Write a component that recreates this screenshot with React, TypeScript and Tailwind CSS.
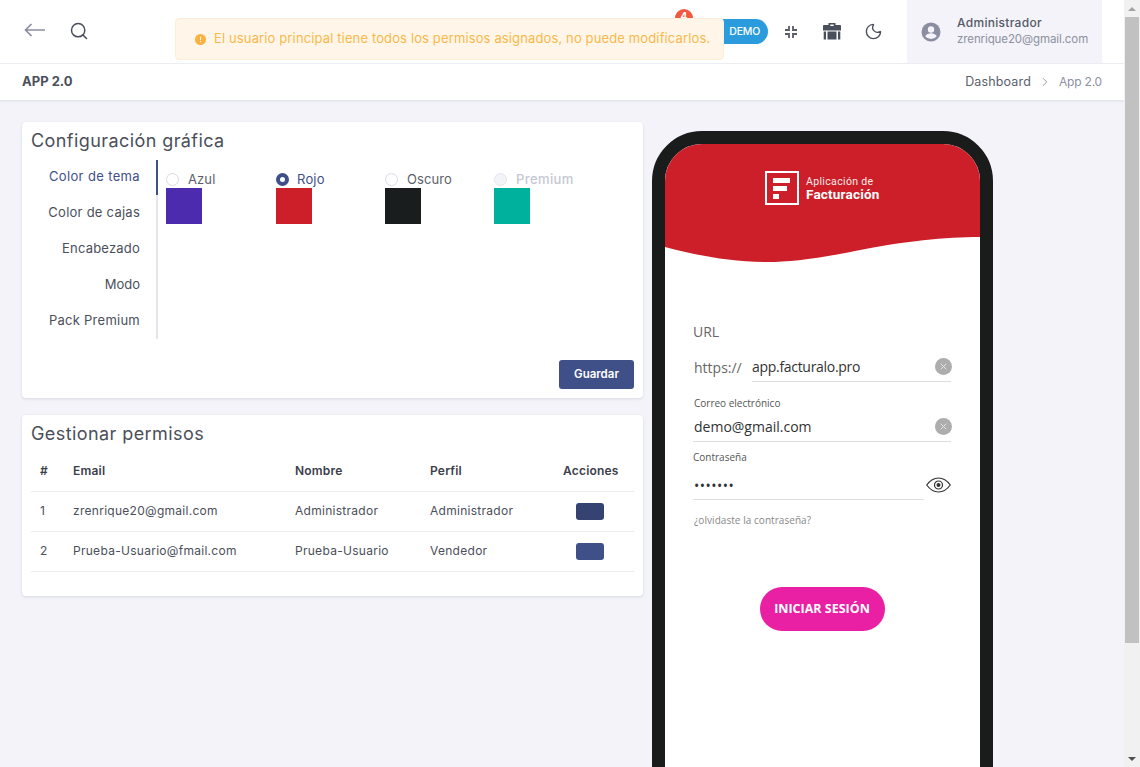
import React from "react";
import { Search, Moon, ChevronRight } from "lucide-react";

const poppins = "font-['Inter','Liberation_Sans',sans-serif]";

function Radio({ label, checked, muted, className }: { label: string; checked?: boolean; muted?: boolean; className: string }) {
  return (
    <div className={className}>
      <div className="flex items-center h-[17px]">
        <span
          className={
            checked
              ? "w-[13px] h-[13px] rounded-full border-[4px] border-[#3f4f88] bg-white"
              : muted
                ? "w-[13px] h-[13px] rounded-full border border-[#e4e6ef] bg-[#f3f4f7]"
                : "w-[13px] h-[13px] rounded-full border border-[#d8dae5] bg-white"
          }
        />
        <span
          className={
            checked
              ? "ml-[8px] text-[13px] tracking-[0.2px] text-[#3f4f88]"
              : muted
                ? "ml-[9px] text-[13px] tracking-[0.4px] font-medium text-[#c5c8d2]"
                : "ml-[9px] text-[13px] tracking-[0.1px] text-[#5b5f6b]"
          }
        >
          {label}
        </span>
      </div>
    </div>
  );
}

function ClearIcon() {
  return (
    <svg width="17" height="17" viewBox="0 0 17 17" className="shrink-0 -mr-[1px]">
      <circle cx="8.5" cy="8.5" r="8.5" fill="#adadad" />
      <path d="M5.7 5.7l5.6 5.6M11.3 5.7l-5.6 5.6" stroke="#e4e4e4" strokeWidth="1" />
    </svg>
  );
}

function Row({ n, email, name, profile, btn }: { n: string; email: string; name: string; profile: string; btn: string }) {
  return (
    <tr className="border-b border-[#e9ebf0] h-[40px] text-[12px] tracking-[0.28px] text-[#4b4f5a]">
      <td className="pl-[9px]">{n}</td>
      <td>{email}</td>
      <td>{name}</td>
      <td>{profile}</td>
      <td>
        <div className={btn} />
      </td>
    </tr>
  );
}

export default function App() {
  return (
    <div className={`${poppins} flex h-[767px] w-[1140px] overflow-hidden bg-[#f3f3f9]`}>
      <main className="relative w-[1124px] h-[767px] overflow-hidden">
        {/* top bar */}
        <header className="flex items-center h-[64px] bg-white border-b border-[#eceef3] pl-[24px] pr-[22px]">
          <svg width="21" height="14" viewBox="0 0 21 14" fill="none" stroke="#8a8ea3" strokeWidth="1.7" className="-mt-[3px]">
            <path d="M21 7H1.500M7.500 1L1.500 7l6 6" />
          </svg>
          <Search className="ml-[24px] -mt-[1px] w-[20px] h-[20px] text-[#4a4f5c]" strokeWidth={1.8} />
          <div className="flex-1" />
          <div className="flex items-center h-[25px] w-[48px] justify-end pr-[8px] rounded-r-full bg-[#2a9bdc] text-white text-[10.5px] font-medium tracking-[-0.2px]">
            DEMO
          </div>
          <svg width="14" height="14" viewBox="0 0 14 14" fill="none" stroke="#565b68" strokeWidth="1.8" className="ml-[16px]">
            <path d="M5 1v4H1M9 1v4h4M5 13V9H1M9 13V9h4" />
          </svg>
          <svg width="18" height="17" viewBox="0 0 18 17" className="ml-[25px] -mt-[1px]">
            <path d="M5.500 0h7v2H17.500l0.500 1v4.500H0V3l0.500-1H5.500zM7.300 1.500V3h3.400V1.500z" fill="#4a4f5c" fillRule="evenodd" />
            <path d="M0.700 8.500H3v8H1.200a0.500 0.500 0 0 1-0.500-0.500zM4.500 8.500h9v8h-9zM15 8.500h2.300V16a0.500 0.500 0 0 1-0.500 0.500H15z" fill="#4a4f5c" />
          </svg>
          <Moon className="ml-[23px] w-[19px] h-[19px] text-[#4a4f5c]" strokeWidth={1.7} />
          <div className="ml-[24px] flex items-center w-[195px] h-[63px] bg-[#f3f3f9] pl-[14px]">
            <svg width="20" height="20" viewBox="0 0 20 20" className="shrink-0">
              <circle cx="10" cy="10" r="9.500" fill="#8a8ea0" />
              <circle cx="10" cy="7.500" r="3.200" fill="#f3f3f9" />
              <path d="M4.200 14.200c1-2 3.400-3 5.800-3s4.800 1 5.800 3a7.400 7.400 0 0 1-11.600 0z" fill="#f3f3f9" />
            </svg>
            <div className="ml-[16px] mt-[-2px]">
              <div className="text-[12px] leading-[16px] tracking-[0.3px] font-medium text-[#555a66]">Administrador</div>
              <div className="text-[11.5px] leading-[16px] tracking-[-0.1px] text-[#8d91a0]">zrenrique20@gmail.com</div>
            </div>
          </div>
        </header>

        {/* notification badge + alert */}
        <div className="absolute left-[675px] top-[9px] w-[18px] h-[18px] rounded-full bg-[#f1583f] text-white text-[10px] font-bold text-center leading-[14px]">
          4
        </div>
        <div className="absolute left-[175px] top-[18px] w-[549px] h-[42px] flex items-center pl-[19px] rounded-[4px] border border-[#fdeed6] bg-[#fff6e9] text-[#fbb84a] text-[13px] tracking-[0.13px] whitespace-nowrap">
          <svg width="11" height="11" viewBox="0 0 11 11" className="shrink-0">
            <circle cx="5.500" cy="5.500" r="5.500" fill="#fbb040" />
            <rect x="5" y="2.500" width="1.100" height="3.600" fill="#fff6e9" />
            <rect x="5" y="7" width="1.100" height="1.200" fill="#fff6e9" />
          </svg>
          <span className="ml-[8px]">El usuario principal tiene todos los permisos asignados, no puede modificarlos.</span>
        </div>

        {/* breadcrumb */}
        <div className="flex items-center justify-between h-[37px] bg-white border-b border-[#e3e4ec] shadow-[0_1px_2px_rgba(50,50,90,0.06)] px-[22px]">
          <span className="text-[13px] font-bold text-[#4b4f5a]">APP 2.0</span>
          <div className="flex items-center text-[12.5px] tracking-[0.15px]">
            <span className="text-[#5b5f6b]">Dashboard</span>
            <ChevronRight className="mx-[7px] w-[14px] h-[14px] text-[#8d91a0]" strokeWidth={1.6} />
            <span className="text-[12px] tracking-[-0.2px] text-[#8d91a0]">App 2.0</span>
          </div>
        </div>

        {/* content */}
        <div className="flex items-start pl-[22px] pt-[21px]">
          <div className="w-[621px] shrink-0">
            <section className="relative h-[276px] bg-white rounded-[4px] shadow-[0_1px_3px_rgba(40,40,80,0.13)] px-[9px] pt-[8px]">
              <h2 className="text-[18px] leading-[22px] tracking-[0.42px] text-[#4b4f5a]">Configuración gráfica</h2>
              <div className="flex mt-[8px]">
                <nav className="relative w-[127px] h-[179px] border-r-[2px] border-[#e3e6ef] text-right pr-[16px]">
                  <div className="absolute right-[-2px] top-0 w-[2px] h-[35px] bg-[#3f4f88]" />
                  <div className="h-[36px] leading-[33px] text-[13px] tracking-[0.36px] text-[#3f4f88]">Color de tema</div>
                  <div className="h-[36px] leading-[33px] text-[13px] tracking-[0.25px] text-[#4b4f5a]">Color de cajas</div>
                  <div className="h-[36px] leading-[33px] text-[13px] tracking-[0.2px] text-[#4b4f5a]">Encabezado</div>
                  <div className="h-[36px] leading-[33px] text-[13px] text-[#4b4f5a]">Modo</div>
                  <div className="h-[36px] leading-[33px] text-[13px] tracking-[0.25px] text-[#4b4f5a]">Pack Premium</div>
                </nav>
                <div className="flex pl-[8px] pt-[11px]">
                  <Radio label="Azul" className="w-[110px]" />
                  <Radio label="Rojo" checked className="w-[109px]" />
                  <Radio label="Oscuro" className="w-[109px]" />
                  <Radio label="Premium" muted className="w-[100px]" />
                </div>
              </div>
              <div className="absolute left-[144px] top-[66px] flex">
                <div className="w-[36px] h-[36px] bg-[#4c2bae]" />
                <div className="ml-[74px] w-[36px] h-[36px] bg-[#cc1f29]" />
                <div className="ml-[73px] w-[36px] h-[36px] bg-[#1a1d1d]" />
                <div className="ml-[73px] w-[36px] h-[36px] bg-[#00b19d]" />
              </div>
              <div className="flex justify-end mt-[21px]">
                <button className="w-[75px] h-[29px] rounded-[3px] bg-[#3f4f88] text-white text-[11.5px] font-semibold">Guardar</button>
              </div>
            </section>

            <section className="mt-[17px] h-[181px] bg-white rounded-[4px] shadow-[0_1px_3px_rgba(40,40,80,0.13)] px-[9px] pt-[8px]">
              <h2 className="text-[18px] leading-[22px] tracking-[0.42px] text-[#4b4f5a]">Gestionar permisos</h2>
              <table className="mt-[6px] w-[603px] table-fixed border-collapse text-left">
                <colgroup>
                  <col className="w-[42px]" />
                  <col className="w-[222px]" />
                  <col className="w-[135px]" />
                  <col className="w-[125px]" />
                  <col className="w-[79px]" />
                </colgroup>
                <thead>
                  <tr className="border-b border-[#e9ebf0] h-[40px] text-[12px] tracking-[0.2px] font-semibold text-[#3c404b]">
                    <th className="pl-[9px] font-semibold">#</th>
                    <th className="font-semibold">Email</th>
                    <th className="font-semibold">Nombre</th>
                    <th className="font-semibold">Perfil</th>
                    <th className="pl-[8px] font-semibold">Acciones</th>
                  </tr>
                </thead>
                <tbody>
                  <Row n="1" email="zrenrique20@gmail.com" name="Administrador" profile="Administrador" btn="ml-[21px] w-[28px] h-[17px] rounded-[3px] bg-[#344372]" />
                  <Row n="2" email="Prueba-Usuario@fmail.com" name="Prueba-Usuario" profile="Vendedor" btn="ml-[21px] w-[28px] h-[17px] rounded-[3px] bg-[#3f4f88]" />
                </tbody>
              </table>
            </section>
          </div>

          {/* phone preview */}
          <div className="ml-[9px] mt-[9px] w-[341px] h-[900px] shrink-0 rounded-[50px] border-[13px] border-[#1a1b1b] bg-white overflow-hidden font-['Open_Sans',sans-serif]">
            <div className="relative h-[118px]">
              <svg width="315" height="118" viewBox="0 0 315 118" className="absolute inset-0">
                <path d="M0 0H315V93C280 93 240 97 190 107C150 115 125 118 102 118C65 118 30 111 0 103Z" fill="#cc1f29" />
              </svg>
              <div className="relative flex items-center pl-[100px] pt-[27px]">
                <svg width="34" height="34" viewBox="0 0 34 34" className="shrink-0">
                  <rect x="1" y="1" width="32" height="32" fill="none" stroke="#fff" strokeWidth="2" />
                  <path d="M8 7h17v5H8zM8 15h14v5H8zM8 23h6v5H8z" fill="#fff" />
                </svg>
                <div className="ml-[7px] -mt-[1px] font-['Roboto',sans-serif] text-white">
                  <div className="text-[10.5px] leading-[13px] tracking-[0.35px] opacity-90">Aplicación de</div>
                  <div className="text-[13.5px] leading-[13px] font-bold tracking-[0.2px]">Facturación</div>
                </div>
              </div>
            </div>

            <div className="pl-[28px] pr-[29px] pt-[60px]">
              <div className="text-[14px] leading-[20px] text-[#666]">URL</div>
              <div className="flex items-center mt-[12px] h-[28px]">
                <span className="w-[59px] pl-[1px] pb-[2px] text-[14px] text-[#666]">https://</span>
                <div className="flex items-center justify-between flex-1 h-[28px] pb-[2px] border-b border-[#dedede] text-[14px] tracking-[-0.3px] text-[#333]">
                  <span>app.facturalo.pro</span>
                  <ClearIcon />
                </div>
              </div>
              <div className="pl-[1px] mt-[14px] text-[10px] leading-[14px] text-[#555]">Correo electrónico</div>
              <div className="flex items-center justify-between h-[30px] mt-[2px] pl-[1px] border-b border-[#dedede] text-[14px] text-[#333]">
                <span>demo@gmail.com</span>
                <ClearIcon />
              </div>
              <div className="mt-[8px] text-[10px] leading-[14px] text-[#555]">Contraseña</div>
              <div className="flex items-center justify-between h-[34px] mt-[2px]">
                <div className="flex items-center w-[231px] h-[34px] pt-[6px] border-b border-[#dedede] text-[14px] tracking-[0.5px] text-[#333] pl-[1px]">•••••••</div>
                <svg width="25" height="16" viewBox="0 0 25 16" fill="none" stroke="#333" strokeWidth="1.200" className="mt-[4px]">
                  <path d="M0.700 8C4 3.500 8 1 12.500 1s8.500 2.500 11.800 7c-3.300 4.500-7.300 7-11.800 7S4 12.500 0.700 8z" />
                  <circle cx="12.500" cy="8" r="4" />
                  <circle cx="12.500" cy="8" r="2" fill="#333" stroke="none" />
                </svg>
              </div>
              <div className="pl-[1px] mt-[13px] text-[10px] leading-[14px] tracking-[0.05px] text-[#888]">¿olvidaste la contraseña?</div>
              <div className="flex justify-center mt-[60px]">
                <button className="w-[125px] h-[44px] rounded-full bg-[#e91fa4] text-white text-[12.5px] font-bold">INICIAR SESIÓN</button>
              </div>
            </div>
          </div>
        </div>
      </main>

      {/* window scrollbar */}
      <div className="flex flex-col items-center w-[16px] h-[767px] bg-[#f1f1f1]">
        <div className="flex items-center justify-center h-[17px] w-full">
          <div className="w-0 h-0 border-x-[4px] border-x-transparent border-b-[4px] border-b-[#a3a3a3]" />
        </div>
        <div className="w-[14px] h-[626px] bg-[#c1c1c1]" />
        <div className="flex-1" />
        <div className="flex items-center justify-center h-[17px] w-full">
          <div className="w-0 h-0 border-x-[4px] border-x-transparent border-t-[4px] border-t-[#505050]" />
        </div>
      </div>
    </div>
  );
}
